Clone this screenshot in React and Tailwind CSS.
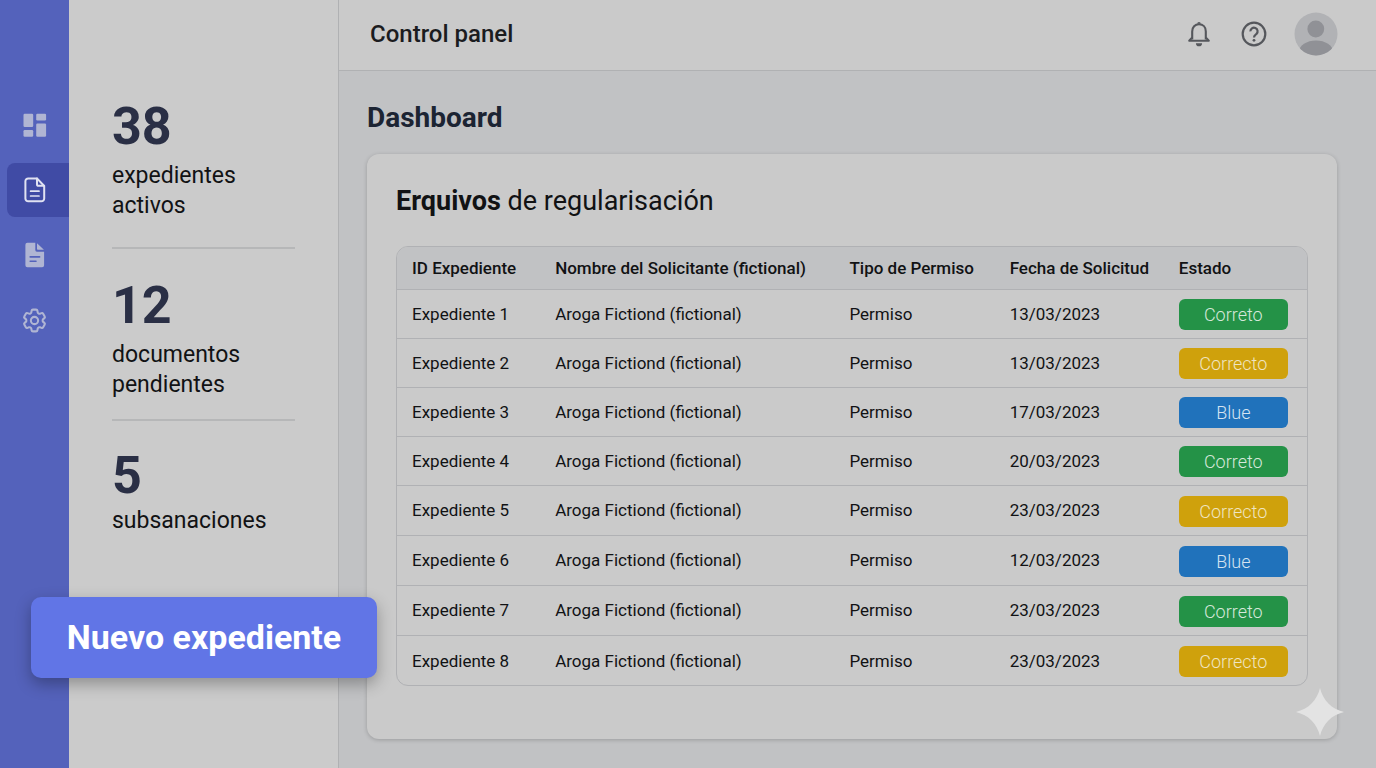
import React from "react";
import { HiOutlineCog6Tooth } from "react-icons/hi2";

const rows = [
  { id: "Expediente 1", date: "13/03/2023", status: "Correto" },
  { id: "Expediente 2", date: "13/03/2023", status: "Correcto" },
  { id: "Expediente 3", date: "17/03/2023", status: "Blue" },
  { id: "Expediente 4", date: "20/03/2023", status: "Correto" },
  { id: "Expediente 5", date: "23/03/2023", status: "Correcto" },
  { id: "Expediente 6", date: "12/03/2023", status: "Blue" },
  { id: "Expediente 7", date: "23/03/2023", status: "Correto" },
  { id: "Expediente 8", date: "23/03/2023", status: "Correcto" },
];

const statusColors = {
  Correto: "bg-[#249247] text-[#d6e8db]",
  Correcto: "bg-[#cfa10c] text-[#f0e5c2]",
  Blue: "bg-[#2072bb] text-[#d5e4f1]",
};

const GridIcon = () => (
  <svg width="24" height="24" viewBox="0 0 24 24" fill="currentColor">
    <rect x="0.5" y="0.8" width="9.7" height="13.2" rx="1.2" />
    <rect x="0.5" y="17" width="9.7" height="6.8" rx="1.2" />
    <rect x="13.2" y="0.8" width="9.9" height="6.6" rx="1.2" />
    <rect x="13.2" y="10.6" width="9.9" height="13.2" rx="1.2" />
  </svg>
);

const FileIcon = () => (
  <svg
    width="22"
    height="26"
    viewBox="0 0 22 26"
    fill="none"
    stroke="currentColor"
    strokeWidth="2"
    strokeLinecap="round"
    strokeLinejoin="round"
  >
    <path d="M13 1.4H4.2a2.8 2.8 0 0 0-2.8 2.8v17.3a2.8 2.8 0 0 0 2.8 2.8h13.2a2.8 2.8 0 0 0 2.8-2.8V9z" />
    <path d="M13 1.6v5.6a1.6 1.6 0 0 0 1.6 1.6h5.4" />
    <path d="M6.6 14.2h8.4M6.6 19h8.4" strokeWidth="1.7" />
  </svg>
);

const FileSolidIcon = () => (
  <svg width="20" height="26" viewBox="0 0 20 26" fill="currentColor">
    <path
      fillRule="evenodd"
      d="M2.4 0.8h7.9v7.3a1.6 1.6 0 0 0 1.6 1.6h7.2v13.6a2 2 0 0 1-2 2H2.4a2 2 0 0 1-2-2V2.8a2 2 0 0 1 2-2zM5.2 14.1a.8.8 0 0 0 0 1.6h9.4a.8.8 0 0 0 0-1.6zM5.2 18.4a.8.8 0 0 0 0 1.6h5.8a.8.8 0 0 0 0-1.6z"
    />
    <path d="M12 1.2l6.9 6.6h-6.1a.8.8 0 0 1-.8-.8z" />
  </svg>
);

const BellIcon = () => (
  <svg width="24" height="26" viewBox="0 0 24 26" fill="none">
    <path
      d="M5.2 18.5V10.4C5.2 6.2 8 3.3 12 3.3s6.8 2.9 6.8 7.1v8.1"
      stroke="currentColor"
      strokeWidth="2.1"
    />
    <path
      d="M5 16.6L2.2 19.7h19.6L19 16.6"
      stroke="currentColor"
      strokeWidth="2"
      strokeLinejoin="round"
    />
    <path d="M10.2 2.7a1.8 1.8 0 0 1 3.6 0zM8.9 22.2h6.2a3.1 3.1 0 0 1-6.2 0z" fill="currentColor" />
  </svg>
);

const HelpIcon = () => (
  <svg width="26" height="26" viewBox="0 0 26 26" fill="none" stroke="currentColor">
    <circle cx="13" cy="13" r="11.3" strokeWidth="2.2" />
    <path
      d="M9.4 10.4a3.6 3.6 0 1 1 6.1 2.5c-1.3 1.2-2.5 1.8-2.5 3.6"
      strokeWidth="2.2"
    />
    <circle cx="13" cy="19.3" r="1.4" fill="currentColor" stroke="none" />
  </svg>
);

const Avatar = () => (
  <svg width="44" height="44" viewBox="0 0 44 44">
    <clipPath id="avatar">
      <circle cx="22" cy="22" r="21.5" />
    </clipPath>
    <g clipPath="url(#avatar)">
      <rect width="44" height="44" fill="#b1b2b5" />
      <circle cx="21.8" cy="17" r="8.4" fill="#909196" />
      <ellipse cx="22" cy="40" rx="17" ry="11.5" fill="#909196" />
    </g>
  </svg>
);

const Sidebar = () => {
  const item = "ml-[7px] pr-[7px] h-[54px] flex items-center justify-center rounded-l-lg";

  return (
    <nav className="w-[69px] shrink-0 bg-[#5462bb] text-[#b0b5d3] pt-[98px] flex flex-col gap-[11px]">
      <a href="#dashboard" aria-label="Dashboard" className={item}>
        <GridIcon />
      </a>
      <a href="#expedientes" aria-label="Expedientes" className={`${item} bg-[#404ba5] text-[#e0e2f2]`}>
        <FileIcon />
      </a>
      <a href="#documentos" aria-label="Documentos" className={item}>
        <FileSolidIcon />
      </a>
      <a href="#ajustes" aria-label="Ajustes" className={item}>
        <HiOutlineCog6Tooth size={29} strokeWidth={1.7} />
      </a>
    </nav>
  );
};

const Stats = () => (
  <aside className="w-[270px] shrink-0 bg-[#cbcbcb] border-r border-[#b0b1b3] px-[43px] pt-[97px] text-[23px] leading-[30px] text-[#111214]">
    <div className="pb-[26px] border-b-2 border-[#b6b7b8]">
      <p className="text-[52px] leading-[60px] font-bold text-[#2a2f45] mb-1">38</p>
      <p>
        expedientes
        <br />
        activos
      </p>
    </div>
    <div className="pt-[27px] pb-[19px] border-b-2 border-[#b6b7b8]">
      <p className="text-[52px] leading-[60px] font-bold text-[#2a2f45] mb-1">12</p>
      <p>
        documentos
        <br />
        pendientes
      </p>
    </div>
    <div className="pt-[25px]">
      <p className="text-[52px] leading-[60px] font-bold text-[#2a2f45]">5</p>
      <p>subsanaciones</p>
    </div>
  </aside>
);

const App = () => {
  return (
    <div className="relative flex min-h-screen font-[Roboto,sans-serif] text-[#111214]">
      <Sidebar />
      <Stats />

      <div className="flex-1 flex flex-col bg-[#c1c2c4]">
        <header className="h-[71px] bg-[#cacaca] border-b border-[#b0b1b3] pl-[31px] pr-[38px] pb-0.5 flex items-center justify-between">
          <h1 className="text-2xl font-medium text-[#1b1c1f]">Control panel</h1>
          <div className="flex items-center text-[#55575c]">
            <button aria-label="Notificaciones" className="mr-[30px]">
              <BellIcon />
            </button>
            <button aria-label="Ayuda" className="mr-[27px]">
              <HelpIcon />
            </button>
            <button aria-label="Perfil">
              <Avatar />
            </button>
          </div>
        </header>

        <main className="flex-1 flex flex-col pl-7 pr-[39px] py-[29px]">
          <h2 className="text-[28px] leading-9 font-bold text-[#1c2433]">Dashboard</h2>

          <section className="flex-1 mt-[18px] bg-[#cacaca] rounded-xl px-[29px] pt-7 pb-[53px] shadow-[0_1px_4px_rgba(0,0,0,0.2)]">
            <h3 className="text-[27px] leading-[38px]">
              <b className="font-bold">Erquivos</b> de regularisación
            </h3>

            <div className="mt-[26px] border border-[#b0b1b4] rounded-xl overflow-hidden">
              <table className="w-full text-[17px] text-left">
                <thead>
                  <tr className="h-[42px] bg-[#c1c2c4] border-b border-[#b0b1b4]">
                    <th className="w-[143px] pl-[15px] pt-0.5 font-medium">ID Expediente</th>
                    <th className="w-[294px] pl-[15px] pt-0.5 font-medium">Nombre del Solicitante (fictional)</th>
                    <th className="w-[160px] pl-[15px] pt-0.5 font-medium">Tipo de Permiso</th>
                    <th className="w-[169px] pl-[15px] pt-0.5 font-medium">Fecha de Solicitud</th>
                    <th className="w-[143px] pl-[15px] pt-0.5 font-medium">Estado</th>
                  </tr>
                </thead>
                <tbody>
                  {rows.map((row) => (
                    <tr
                      key={row.id}
                      className="h-[49px] nth-[n+5]:h-[50px] border-b border-[#b0b1b4] last:border-b-0"
                    >
                      <td className="pl-[15px] pt-0.5">{row.id}</td>
                      <td className="pl-[15px] pt-0.5">Aroga Fictiond (fictional)</td>
                      <td className="pl-[15px] pt-0.5">Permiso</td>
                      <td className="pl-[15px] pt-0.5">{row.date}</td>
                      <td className="pl-[15px] pt-0.5">
                        <span
                          className={`block w-[109px] rounded-md text-center text-lg/[31px] font-light ${statusColors[row.status]}`}
                        >
                          {row.status}
                        </span>
                      </td>
                    </tr>
                  ))}
                </tbody>
              </table>
            </div>
          </section>
        </main>
      </div>

      <button className="absolute left-[31px] bottom-[90px] w-[346px] h-[81px] rounded-[10px] bg-[#6175e6] text-white text-[34px] font-bold shadow-[0_6px_16px_rgba(0,0,0,0.3)]">
        Nuevo expediente
      </button>

      <svg className="absolute right-8 bottom-8" width="48" height="48" viewBox="0 0 48 48">
        <path d="M24 0C27 12.5 35.5 21 48 24C35.5 27 27 35.5 24 48C21 35.5 12.5 27 0 24C12.5 21 21 12.5 24 0z" fill="#e3e3e3" />
      </svg>
    </div>
  );
};

export default App;
